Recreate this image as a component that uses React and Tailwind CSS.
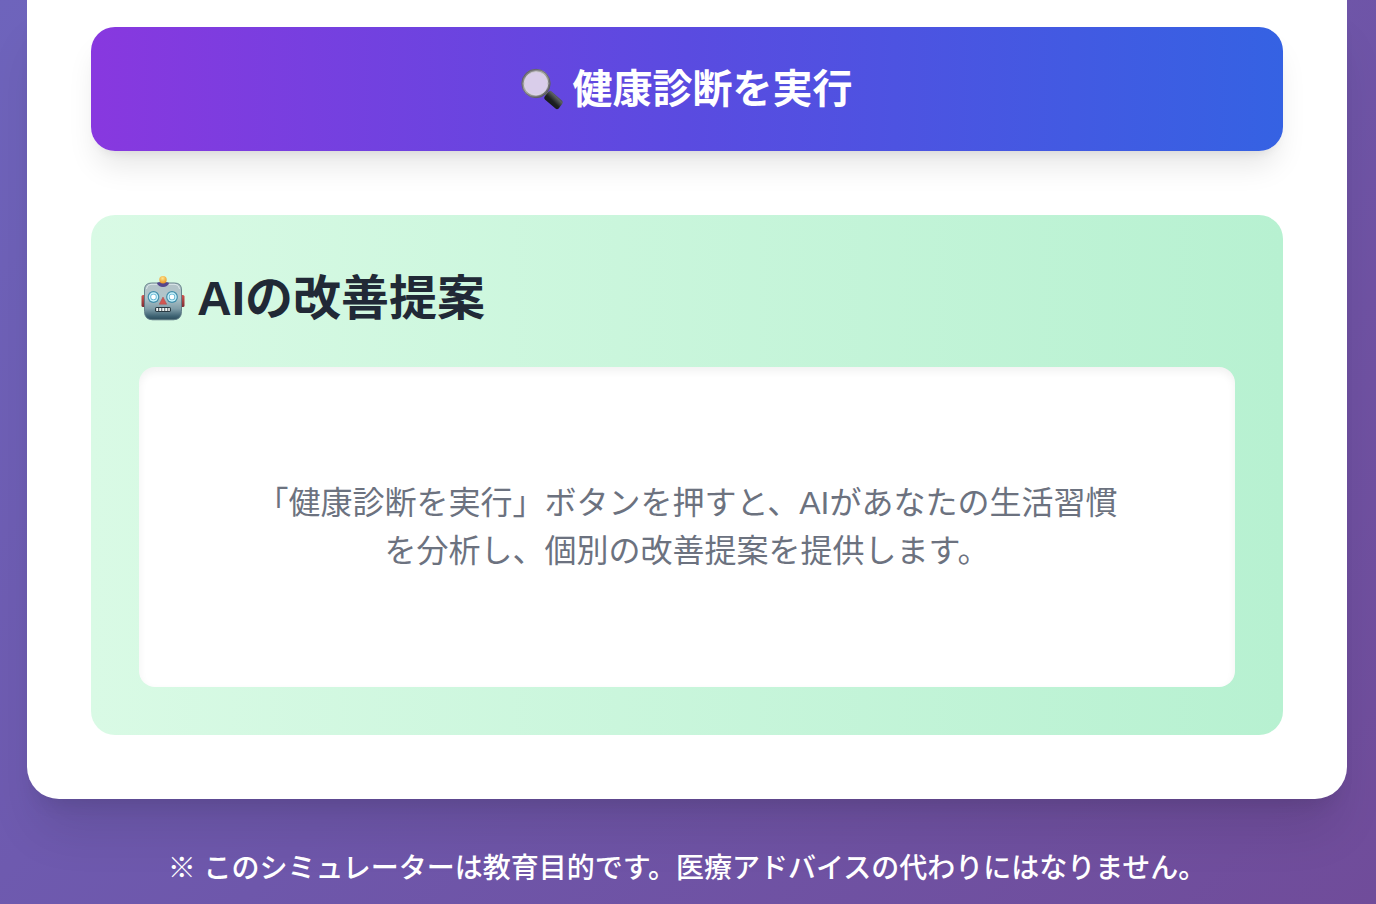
import React from "react";

function MagnifierIcon() {
  return (
    <svg viewBox="0 0 40 40" className="size-10 shrink-0 overflow-visible" aria-hidden="true">
      <defs>
        <linearGradient id="rim" x1="0" y1="0" x2="1" y2="1">
          <stop offset="0" stopColor="#6d6d72" />
          <stop offset="0.45" stopColor="#a9a9a6" />
          <stop offset="1" stopColor="#55555a" />
        </linearGradient>
        <linearGradient id="handle" x1="0" y1="1" x2="1" y2="0">
          <stop offset="0" stopColor="#0c0e0f" />
          <stop offset="0.45" stopColor="#1d2022" />
          <stop offset="0.65" stopColor="#5b6061" />
          <stop offset="1" stopColor="#141617" />
        </linearGradient>
      </defs>
      <path d="M23 23l5 4.500" stroke="#77787a" strokeWidth="4" />
      <path
        d="M22.700 27.500l4-5q1.400-1.300 2.900 0l10.600 9.200q1.200 1.400.1 3l-3.600 4.700q-1.600 1.500-3.200.2l-10.600-9q-1.400-1.500-.2-3.100z"
        fill="url(#handle)"
      />
      <circle cx="14" cy="14.500" r="13" fill="#d9cdea" stroke="url(#rim)" strokeWidth="2.800" />
      <circle cx="14" cy="14.500" r="14.200" fill="none" stroke="#4d4d55" strokeWidth="0.600" />
      <circle cx="14" cy="14.500" r="11.900" fill="none" stroke="#e8e4ee" strokeWidth="0.700" />
    </svg>
  );
}

function RobotIcon() {
  return (
    <svg viewBox="0 0 48 48" className="size-12 shrink-0" aria-hidden="true">
      <defs>
        <linearGradient id="head" x1="0" y1="0" x2="0" y2="1">
          <stop offset="0" stopColor="#b3c3c8" />
          <stop offset="0.4" stopColor="#b0c5ca" />
          <stop offset="0.7" stopColor="#7f9da8" />
          <stop offset="0.9" stopColor="#3e6373" />
          <stop offset="1" stopColor="#2c4c5b" />
        </linearGradient>
        <linearGradient id="ear" x1="0" y1="0" x2="0" y2="1">
          <stop offset="0" stopColor="#d0564f" />
          <stop offset="1" stopColor="#7c2c34" />
        </linearGradient>
        <radialGradient id="bulb" cx="0.45" cy="0.3" r="0.7">
          <stop offset="0" stopColor="#ffe58a" />
          <stop offset="1" stopColor="#e8921f" />
        </radialGradient>
      </defs>
      <rect x="2.500" y="20" width="6" height="12" rx="1.500" fill="url(#ear)" />
      <rect x="39.500" y="20" width="6" height="12" rx="1.500" fill="url(#ear)" />
      <path
        d="M12.500 8h23q7 0 7 7v21.500q0 8-8 8.300h-21q-8-.3-8-8.300V15q0-7 7-7z"
        fill="url(#head)"
        stroke="#5d7985"
        strokeWidth="0.900"
      />
      <path d="M7.500 14q1-4.700 5.500-4.700h5M30 9.300h5q4.500 0 5.500 4.700" fill="none" stroke="#dce9eb" strokeWidth="1" />
      <path d="M18 8.300q1-1.500 6-1.500t6 1.500q-1.500 3.700-6 3.700t-6-3.700z" fill="#55468c" />
      <circle cx="24" cy="4.800" r="3.700" fill="url(#bulb)" />
      <circle cx="14.500" cy="22" r="5.900" fill="#418eaa" />
      <circle cx="33" cy="22" r="5.900" fill="#418eaa" />
      <circle cx="14.500" cy="22" r="4.700" fill="#c9f1fa" />
      <circle cx="33" cy="22" r="4.700" fill="#c9f1fa" />
      <circle cx="14.500" cy="22" r="3.200" fill="#5fb4d2" />
      <circle cx="33" cy="22" r="3.200" fill="#5fb4d2" />
      <circle cx="14.500" cy="22" r="2.400" fill="#ffffff" />
      <circle cx="33" cy="22" r="2.400" fill="#ffffff" />
      <path d="M24 22l3.700 7.200h-7.400z" fill="#d45550" stroke="#a8484a" strokeWidth="0.500" />
      <rect x="16" y="32" width="16" height="5" rx="1.800" fill="#293a43" />
      <path
        d="M17.200 33h2v3h-2zM20.200 33h2.200v3h-2.200zM23.200 33h2.200v3h-2.200zM26.200 33h2.200v3h-2.200zM29.200 33h1.600v3h-1.600z"
        fill="#f3f6f4"
      />
    </svg>
  );
}

export default function App() {
  return (
    <div
      lang="ja"
      className="min-h-screen bg-[linear-gradient(135deg,#6e64bc_0%,#6e57ab_50%,#704c9a_100%)] pr-[29px] pb-3 pl-[27px] font-['Liberation_Sans','Noto_Sans_CJK_JP',sans-serif]"
    >
      <main className="rounded-b-[32px] bg-white px-16 pt-[27px] pb-16 shadow-[0_40px_50px_-10px_rgba(0,0,0,0.1),0_16px_20px_-12px_rgba(0,0,0,0.1)]">
        <button
          type="button"
          className="flex w-full items-center justify-center gap-[11px] rounded-3xl bg-[linear-gradient(to_right,#8838df,#5a4be0_50%,#3562e3)] py-8 text-[40px] leading-[60px] font-bold text-white shadow-[0_20px_30px_-6px_rgba(0,0,0,0.1),0_8px_12px_-8px_rgba(0,0,0,0.1)]"
        >
          <MagnifierIcon />
          <span>健康診断を実行</span>
        </button>

        <section
          aria-labelledby="advice-title"
          className="mt-16 rounded-3xl bg-[linear-gradient(to_right,#d9fae5,#b7f1d1)] p-12"
        >
          <h2
            id="advice-title"
            className="flex items-center gap-[10px] text-[48px] leading-[72px] font-bold text-[#212936]"
          >
            <RobotIcon />
            <span>AIの改善提案</span>
          </h2>
          <div className="mt-8 flex min-h-80 items-center justify-center rounded-2xl bg-white p-8 shadow-[inset_0_4px_8px_rgba(0,0,0,0.06)]">
            <p className="max-w-[880px] text-center text-[32px] leading-[48px] text-[#6c727f]">
              「健康診断を実行」ボタンを押すと、AIがあなたの生活習慣を分析し、個別の改善提案を提供します。
            </p>
          </div>
        </section>
      </main>

      <footer className="mt-12 text-center text-[28px] leading-[44px] font-medium text-white">
        <p>※ このシミュレーターは教育目的です。医療アドバイスの代わりにはなりません。</p>
      </footer>
    </div>
  );
}
